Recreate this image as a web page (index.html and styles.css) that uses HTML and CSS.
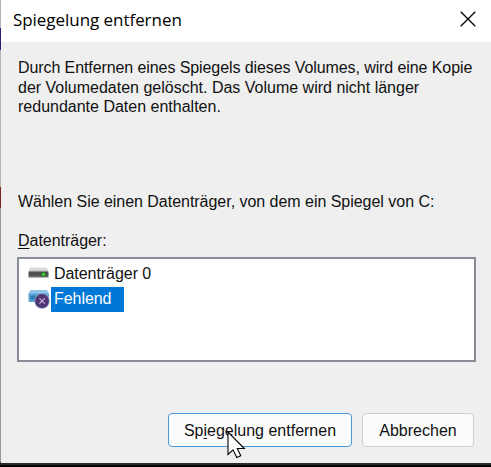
FILE: index.html
```html
<!DOCTYPE html>
<html lang="de">
<head>
  <meta charset="UTF-8" />
  <meta name="viewport" content="width=device-width, initial-scale=1.0"/>
  <title>Spiegelung entfernen</title>
  <link rel="stylesheet" href="styles.css">
</head>
<body>
  <div class="dialog">
    <div class="titlebar">
      <h1>Spiegelung entfernen</h1>
      <svg class="close" width="16" height="16" viewBox="0 0 16 16">
        <path d="M0.7 0.7 L15.3 15.3 M15.3 0.7 L0.7 15.3" stroke="#000" stroke-width="1.3" fill="none"/>
      </svg>
    </div>

    <div class="content">
      <p class="info">Durch Entfernen eines Spiegels dieses Volumes, wird eine Kopie<br>der Volumedaten gelöscht. Das Volume wird nicht länger<br>redundante Daten enthalten.</p>
      <p class="prompt">Wählen Sie einen Datenträger, von dem ein Spiegel von C:</p>
      <p class="list-label"><u>D</u>atenträger:</p>

      <ul class="disk-list">
        <li>
          <svg width="22" height="22" viewBox="0 0 22 22">
            <defs>
              <linearGradient id="top" x1="0" y1="0" x2="0" y2="1">
                <stop offset="0" stop-color="#eeeeee"/>
                <stop offset="1" stop-color="#bcbcbc"/>
              </linearGradient>
            </defs>
            <path d="M2 4 H18.5 L20.5 9 H0.5 Z" fill="url(#top)"/>
            <rect x="0.5" y="8.6" width="20" height="5.4" rx="0.8" fill="#505050"/>
            <rect x="0.5" y="13.6" width="20" height="1.2" fill="#a0a0a0"/>
            <circle cx="15.5" cy="11.3" r="2.4" fill="#267a26"/>
            <circle cx="15.5" cy="11.3" r="1.4" fill="#3be43b"/>
          </svg>
          <span>Datenträger 0</span>
        </li>
        <li class="selected">
          <svg width="22" height="22" viewBox="0 0 22 22">
            <path d="M2 2 H19 L21 6 H0.5 Z" fill="#8fc3e8"/>
            <rect x="0.5" y="5.5" width="20.5" height="8.5" rx="0.8" fill="#5ba3d4"/>
            <rect x="2.5" y="7.5" width="5" height="4" fill="#2f78b0"/>
            <circle cx="14" cy="13" r="7.7" fill="#86a1c4"/>
            <circle cx="14" cy="13" r="6.9" fill="#513573"/>
            <path d="M11.5 10.4 L16.8 15.6 M16.8 10.3 L11.4 15.7" stroke="#c9b3da" stroke-width="1.2"/>
          </svg>
          <span>Fehlend</span>
        </li>
      </ul>

      <div class="buttons">
        <button class="primary">Sp<u>i</u>egelung entfernen</button>
        <button class="cancel">Abbrechen</button>
      </div>
    </div>
  </div>

  <svg class="cursor" width="19" height="28" viewBox="0 0 19 28">
    <path d="M1 1 V23.5 L6 18.8 L9.8 26.5 L13.8 24.7 L10.3 17.5 H17.3 Z" fill="#fff" stroke="#000" stroke-width="1.1"/>
  </svg>
</body>
</html>
```

FILE: styles.css
```css
* {
  box-sizing: border-box;
}
body {
  margin: 0;
  height: 467px;
  overflow: hidden;
  background: #000;
  font-family: "Liberation Sans", Arial, sans-serif;
  font-size: 16px;
  color: #111;
}
.dialog {
  height: 465px;
  background: #efefef;
  border-left: 1px solid;
  border-bottom: 2px solid #2b2b2d;
  /* desktop showing through at the left edge */
  border-image: linear-gradient(#b5b5b5 30px, #28207c 30px, #28207c 52px, #b5b5b5 52px, #b5b5b5 188px, #7c2020 188px, #7c2020 209px, #999 209px, #999 462px, #2b2b2d 462px) 2 0 2 1;
}
.titlebar {
  display: flex;
  justify-content: space-between;
  height: 42px;
  padding: 0 15px 0 12px;
  background: #fff;
}
.titlebar h1 {
  margin: 0;
  font-family: "Open Sans", "Segoe UI", sans-serif;
  font-size: 17px;
  font-weight: normal;
  letter-spacing: -0.05px;
  line-height: 39px;
  color: #000;
}
.close {
  margin-top: 11px;
}
.content {
  padding: 15px 15px 0 16px;
}
.content p {
  margin: 0;
  padding-left: 1px;
  line-height: 20px;
  letter-spacing: -0.03px;
  white-space: nowrap;
}
.content .info {
  height: 134px;
  padding-top: 1px;
  line-height: 19.7px;
  letter-spacing: 0;
}
.content .info::first-line {
  letter-spacing: -0.09px;
}
.content .prompt {
  padding-top: 1px;
}
.content .list-label {
  margin-top: 19px;
}
u {
  text-decoration-thickness: 1px;
  text-underline-offset: 2px;
}
.disk-list {
  list-style: none;
  height: 105px;
  margin: 6px 0 0;
  padding: 2px 9px;
  background: #fff;
  border: 2px solid #888d95;
}
.disk-list li {
  display: flex;
  align-items: center;
  height: 25.5px;
}
.disk-list span {
  height: 25px;
  margin-left: 1px;
  padding: 0 3px;
  line-height: 25px;
  letter-spacing: -0.05px;
}
.disk-list .selected span {
  padding-right: 13px;
  line-height: 24px;
  background: #0078d7;
  color: #fff;
}
.buttons {
  display: flex;
  justify-content: flex-end;
  gap: 10px;
  margin-top: 51px;
  padding-right: 2px;
}
button {
  height: 34px;
  padding: 2px 0 0;
  font: inherit;
  color: #111;
  background: #fbfbfb;
  border: 1px solid #d0d0d0;
  border-radius: 4px;
}
.primary {
  width: 184px;
  border-color: #4a98dc;
}
.cancel {
  width: 112px;
}
.cursor {
  position: absolute;
  left: 227px;
  top: 431px;
}
```
